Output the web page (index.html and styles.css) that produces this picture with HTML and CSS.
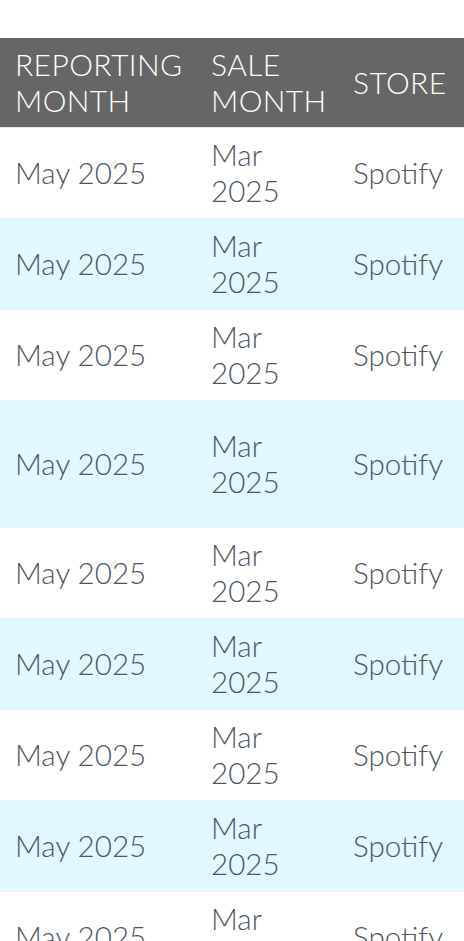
FILE: index.html
```html
<!DOCTYPE html>
<html lang="en">
<head>
    <meta charset="UTF-8">
    <meta name="viewport" content="width=device-width, initial-scale=1.0">
    <title>Sales Report</title>
    <link rel="stylesheet" href="styles.css">
</head>
<body>
    <!-- Report table -->
    <div class="report-wrap">
        <table class="report-table">
            <colgroup>
                <col class="col-reporting">
                <col class="col-sale">
                <col class="col-store">
            </colgroup>
            <thead>
                <tr>
                    <th>REPORTING MONTH</th>
                    <th>SALE MONTH</th>
                    <th>STORE</th>
                </tr>
            </thead>
            <tbody>
                <tr><td>May 2025</td><td>Mar 2025</td><td>Spotify</td></tr>
                <tr><td>May 2025</td><td>Mar 2025</td><td>Spotify</td></tr>
                <tr><td>May 2025</td><td>Mar 2025</td><td>Spotify</td></tr>
                <tr class="tall"><td>May 2025</td><td>Mar 2025</td><td>Spotify</td></tr>
                <tr><td>May 2025</td><td>Mar 2025</td><td>Spotify</td></tr>
                <tr><td>May 2025</td><td>Mar 2025</td><td>Spotify</td></tr>
                <tr><td>May 2025</td><td>Mar 2025</td><td>Spotify</td></tr>
                <tr><td>May 2025</td><td>Mar 2025</td><td>Spotify</td></tr>
                <tr><td>May 2025</td><td>Mar 2025</td><td>Spotify</td></tr>
            </tbody>
        </table>
    </div>
</body>
</html>
```

FILE: styles.css
```css
body {
    margin: 0;
    background: #ffffff;
    font-family: Lato, "Open Sans", sans-serif;
    font-weight: 300;
}

/* Table wrapper */
.report-wrap {
    padding-top: 38px;
    overflow: hidden;
}

.report-table {
    width: 464px;
    table-layout: fixed;
    border-collapse: collapse;
    font-size: 29.6px;
    line-height: 36px;
}

.col-reporting { width: 196px; }
.col-sale { width: 142px; }
.col-store { width: 126px; }

/* Header row */
.report-table th {
    background-color: #666666;
    color: #ffffff;
    font-size: 30px;
    font-weight: 300;
    letter-spacing: 0.4px;
    text-align: left;
    vertical-align: middle;
    padding: 8px 0 9px 15px;
    border-bottom: 1px solid #e4f2f6;
}

/* Body rows */
.report-table td {
    color: #4d575d;
    vertical-align: middle;
    padding: 9px 0 9px 15px;
    border-bottom: 1px solid #e9f1f3;
}

.report-table tbody tr:nth-child(even) td {
    background-color: #e0f8fe;
}

.report-table tr.tall td {
    height: 108px;
}
```
